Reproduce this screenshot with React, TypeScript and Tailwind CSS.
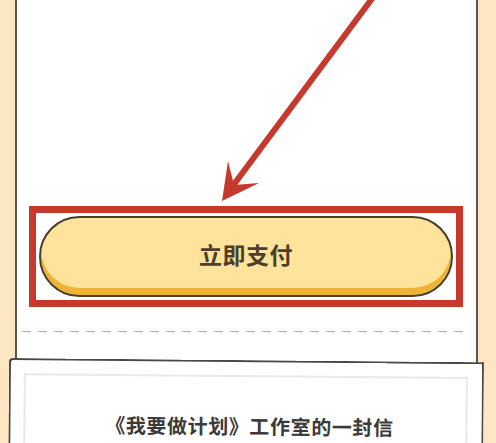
export default function App() {
  return (
    <div
      className="relative w-[496px] h-[443px] overflow-hidden bg-[#fde6c2]"
      style={{ fontFamily: '"Noto Sans CJK SC", "Noto Sans", sans-serif' }}
    >
      {/* main card */}
      <div className="ml-[15px] w-[463px] border-x-2 border-[#5a5550] bg-white pt-[206px] pb-[34px]">
        <div className="ml-[12px] w-[434px] h-[101px] border-[7px] border-[#c8392d] bg-white p-[3px]">
          <button className="flex h-full w-full items-center justify-center rounded-full border-2 border-[#4b3c2c] bg-[#fde39c] shadow-[inset_0_-7px_0_#efb436]">
            <span className="pb-[4px] text-[23px] font-bold tracking-[0.5px] text-[#4d3d2b]">
              立即支付
            </span>
          </button>
        </div>
        <div className="ml-[5px] mt-[24px] h-px w-[448px] bg-[repeating-linear-gradient(90deg,#b0b0b0_0_9px,transparent_9px_16px)]" />
      </div>

      {/* envelope pocket */}
      <div className="-mt-[8px] ml-[9px] w-[475px] h-[120px] origin-top-left rotate-[0.5deg] rounded-tl-[4px] border-2 border-b-0 border-[#4a4744] bg-white px-[13px] pt-[13px]">
        <div className="h-full w-[444px] border-2 border-b-0 border-[#e9e9e9] pt-[35px] text-center">
          <p className="pl-[8px] text-[20px] font-bold leading-[28px] tracking-[0.6px] text-[#3c3a38]">
            《我要做计划》工作室的一封信
          </p>
        </div>
      </div>

      {/* annotation arrow */}
      <svg
        className="pointer-events-none absolute inset-0"
        width="496"
        height="443"
        viewBox="0 0 496 443"
      >
        <line x1="374" y1="-4" x2="232" y2="187" stroke="#c8392d" strokeWidth="6" />
        <polygon points="222,201 228,161 234,185 259,183" fill="#c8392d" />
      </svg>
    </div>
  )
}
